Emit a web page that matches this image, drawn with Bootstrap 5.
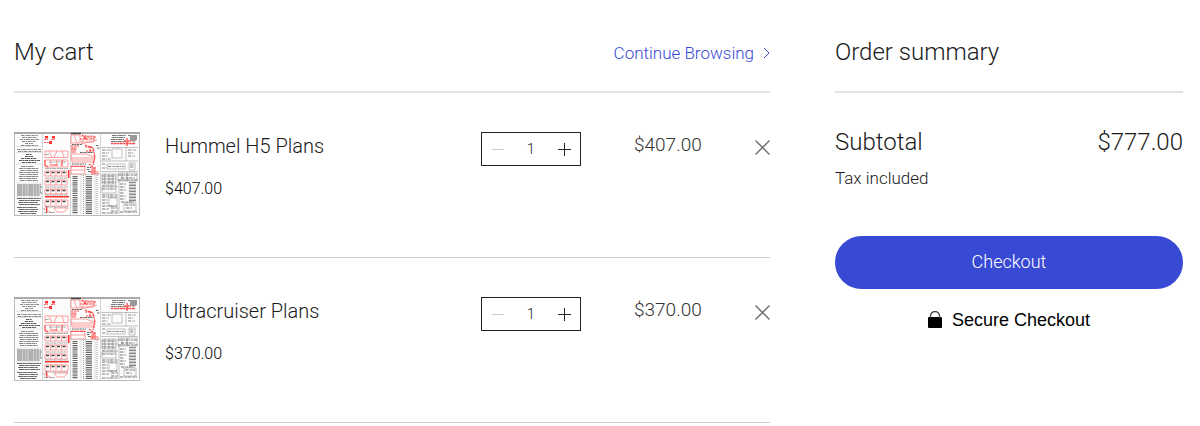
<!DOCTYPE html>
<html lang="en">
<head>
<meta charset="utf-8">
<meta name="viewport" content="width=device-width, initial-scale=1">
<title>My cart</title>
<link href="https://cdn.jsdelivr.net/npm/bootstrap@5.3.0/dist/css/bootstrap.min.css" rel="stylesheet">
<style>
  body { font-family: Roboto, "Liberation Sans", sans-serif; font-weight: 300; color: #1a1a1a; background: #fff; }
  .cart-page { padding: 30px 17px 0 14px; }
  @media (min-width: 992px) {
    .cart-page { display: grid; grid-template-columns: minmax(0, 63fr) minmax(0, 29fr); column-gap: 65px; }
  }
  .section-head { height: 63px; padding-top: 4px; border-bottom: 2px solid #e2e2e2; }
  .section-head h1, .section-head h2 { font-size: 24px; line-height: 36px; font-weight: 300; margin: 0; }
  .browse { font-size: 17px; line-height: 38px; color: #384ad3; gap: 9px; }
  .cart-item { padding: 39px 0 41px; border-bottom: 1px solid #ccc; }
  .thumb { width: 126px; height: 84px; margin-right: 25px; }
  .item-title { font-size: 20px; line-height: 28px; font-weight: 300; margin: 0; }
  .unit-price { font-size: 16px; line-height: 24px; margin-top: 17px; color: #000; }
  .stepper { width: 100px; height: 34px; border: 1px solid #222; margin-right: 53px; }
  .stepper button { width: 32px; padding: 0; border: 0; background: none; color: #222; line-height: 0; }
  .stepper button:disabled { color: #ccc; }
  .stepper input { width: 34px; padding: 0; border: 0; text-align: center; font-size: 14px; font-weight: 300; color: #1a1a1a; background: none; }
  .line-price { width: 112px; font-size: 19px; line-height: 26px; color: #333; }
  .remove { width: 32px; height: 30px; padding: 0 8px 0 9px; border: 0; background: none; color: #666; margin-right: -8px; line-height: 0; }
  .subtotal { font-size: 24px; line-height: 36px; margin-top: 31px; }
  .tax { font-size: 17px; line-height: 24px; margin-top: 6px; }
  .checkout { height: 53px; margin-top: 46px; padding: 0 0 3px; border: 0; border-radius: 27px; background: #384ad3; color: #fff; font-size: 18px; font-weight: 300; }
  .checkout:hover { background: #2c3cb8; color: #fff; }
  .secure { font: 400 18px/24px "Liberation Sans", Arial, sans-serif; color: #000; gap: 10px; margin-top: 19px; }
</style>
</head>
<body>
<svg width="0" height="0" class="position-absolute" aria-hidden="true">
  <filter id="scan" x="0" y="0" width="1" height="1"><feGaussianBlur stdDeviation=".45"/></filter>
  <symbol id="plans" viewBox="0 0 126 84">
    <rect width="126" height="84" fill="#fcfcfc"/>
    <g filter="url(#scan)">
    <rect width="126" height="84" fill="#fcfcfc"/>
    <!-- column rules -->
    <path d="M28.5 2V83M56.5 2V83M86.5 2V83" stroke="#bbb" stroke-width=".6"/>
    <!-- left text column -->
    <g fill="none" stroke="#555" stroke-width="1">
      <path stroke="#888" stroke-dasharray="3 .7 1.5 .5 4 .8" d="M7 3.5H24M8 5.5H23M6 7.5H25M8 9.5H22M11 11.5H19M7 13.5H24M3 17.500H27M4 19.500H27"/>
      <path stroke-dasharray="3 .6 2 .5" d="M12 22.500H18M11 24.500H19M7 26.500H23M5 28.500H26M8 30.500H22"/>
      <path stroke="#888" stroke-width="1.200" stroke-dasharray="4 .5 2 .6 5 .4" d="M7 34.500H20M5 36.500H24M6 38.500H24M5 40.500H25M6 42.500H24M5 44.500H25M5 46.500H23M6 48.500H24"/>
      <path stroke="#666" stroke-width="1.200" stroke-dasharray="5 .4 3 .3 2 .5" d="M3 53H27M3 55H28M3 57H27M3 59H27M3 61H28M3 63H26M3 66.500H27M5 68.500H26M4 70.500H24M5 72.500H26M3 75.500H23M5 77.500H24M4 79.500H23M6 81.500H22"/>
      <path stroke="#ccc" stroke-width=".5" d="M2 14.500H28M2 20.500H28M2 32H28M2 51H28M2 65H28"/>
    </g>
    <!-- second column: parts sheets -->
    <path fill="#f33" d="M31 4h3v2.500h-3zM38 4h3v2.500h-3zM35 9h3v3h-3zM54 38h1.500v8H54zM31 64h24v1.500H31zM32 74h1.300v7H32z"/>
    <path stroke="#e66" stroke-width="1" stroke-dasharray="2 .7" d="M30 10.500H36M30 7.500H34M37 7.500H41"/>
    <g fill="none" stroke="#f66" stroke-width=".6">
      <path d="M31 19H54V25.500H31zM35 19L38 25.500M43 19L40 25.500M48 19L50 25.500M31 28H54V35H31zM37 28L36 34M43 28L42 34M49 28L47 34"/>
      <path stroke="#f55" stroke-width="1.100" d="M31 28V33L34 35M48 28V34M37 33H44"/>
      <path d="M31 39H53V44H31zM31 48H53V53H31zM31 57H53V62H31zM31 68H54V74H31zM36.500 39V44M42 39V44M47.500 39V44M36.500 48V53M42 48V53M47.500 48V53M36.500 57V62M42 57V62M47.500 57V62M36.500 67V73M42 67V73M47.500 67V73M40 76H54L50 80H43zM29 76L38 81"/>
    </g>
    <path fill="none" stroke="#444" stroke-width="1.300" stroke-dasharray="3 2.500" d="M32 40.500H53M32 49.500H53M32 58.500H53M32 69.500H53"/>
    <path fill="none" stroke="#999" stroke-width=".8" stroke-dasharray="4 .6 2 .5" d="M31 36.500H54M31 46H54M31 55H54M31 63H54M31 75H54M31 22.500H35M35 30H52M30 77.500H31M30 80.500H41"/>
    <!-- third column: assembly sketches -->
    <g fill="none" stroke="#f77" stroke-width=".7">
      <path d="M57 3H66V11H57zM67 4H80V10H67M60 3L63 11M72 3L67 12L83 8M57 22H72L80 25V30H58zM58 26H79M58 28H79M57 34H71V42H57zM57 38H71"/>
      <path stroke="#f44" stroke-width="1.200" stroke-dasharray="2 .7 3 .5" d="M68 3L73 8M66 7H81M70 5H82M57 14H65M57 17H63M71 13L79 16L81 25L79 33M71 15H78M72 19H80M76 14V21M75 32L80 36L78 42M57 34.500H72M76 40H85M77 42H85M81 35V42"/>
    </g>
    <path fill="#f88" opacity=".7" d="M57 15h5v6h-5zM77 35h4v7h-4z"/>
    <path stroke="#666" stroke-width="1" stroke-dasharray="2 .6" fill="none" d="M82 13.500H85M73 35.500H77M73 37.500H76M74 39.500H77M83 16H86M58 12.500H68M66 20.500H79M58 32H72"/>
    <!-- parts lists -->
    <path fill="none" stroke="#666" stroke-width="5" stroke-dasharray="1 .8 1.200 .9 1 .8" d="M61 44V82"/>
    <path fill="none" stroke="#666" stroke-width="6" stroke-dasharray="1 .8 1.100 .8" d="M75 44V82"/>
    <path fill="none" stroke="#999" stroke-width="1" stroke-dasharray="1 1" d="M69.500 43V82M83 43V82"/>
    <path fill="none" stroke="#bbb" stroke-width=".5" d="M57 42.500H86M67 42V82M71.500 42V82M81 42V82"/>
    <!-- fourth column: title block and details -->
    <path stroke="#777" stroke-width="1" stroke-dasharray="4 .5 2 .5" fill="none" d="M98 3.500H112M98 5.500H111M97 7.500H110M97 9.500H112M114 3.500H122"/>
    <path fill="#999" d="M116 3h7v5l-3.500 2L116 8z"/>
    <path stroke="#f44" stroke-width="1.300" stroke-dasharray="2 .6 3 .5" d="M97 11.500H121M113 6V14M110 9H117"/>
    <g fill="none" stroke="#999" stroke-width=".6">
      <path d="M87 15.500H124M87 29H124M112 15V29M87 39.500H124M98 17H108V26H98zM93 32H111V37H93zM115 31H121V38H115zM88 42H102V52H88zM104 41H123V49H104zM88 55H102V61H88zM105 49V82M95 66H103V74H95zM110 71H122V79H110z"/>
      <path stroke="#888" stroke-dasharray="3 .7 1 1 2 .6" stroke-width="1" d="M88 18H97M88 21H95M88 24H94M88 27H97M114 18H122M114 21H120M114 24H121M94 34.500H110M116 33H120M116 35H120M88 32H92M88 36H92"/>
      <path stroke="#777" stroke-dasharray="3 .6 1 .7 2 .6" stroke-width="1.100" d="M88 44H102M88 47H102M88 50H102M104 43H123M107 46H121M104 48H124M106 52H112M106 55H111M106 58H112M106 61H110M106 64H112M106 67H111M88 54H104M88 57H102M88 63H104M88 65H104M88 68H94M88 71H94M88 74H103M88 77H95M97 76H104M97 79H104M88 81H104M107 70H120M111 73H121M106 80H123M112 76H118"/>
      <path stroke="#888" stroke-width="7" stroke-dasharray="1 .7 .7 .6" d="M118.500 50V70"/>
      <path stroke="#666" d="M91 42V52M95 42V52M99 42V52M108 41V48M113 41V48"/>
    </g>
    </g>
    <!-- sheet frame -->
    <rect x=".5" y=".5" width="125" height="83" fill="none" stroke="#bbb"/>
    <path d="M0 1H126" stroke="#aaa" stroke-width="2"/>
    <path d="M57 1.500H67" stroke="#444" stroke-width="1.500"/>
  </symbol>
  <symbol id="minus" viewBox="0 0 14 14"><path d="M1 7.500H13" stroke="currentColor"/></symbol>
  <symbol id="plus" viewBox="0 0 14 14"><path d="M1 7.500H14M7.500 1V14" stroke="currentColor"/></symbol>
  <symbol id="cross" viewBox="0 0 15 15"><path d="M.5.5L14.500 14.500M14.500.5L.5 14.500" stroke="currentColor" stroke-width="1.300"/></symbol>
</svg>

<div class="cart-page">
  <main>
    <div class="section-head d-flex align-items-start justify-content-between">
      <h1>My cart</h1>
      <a href="#" class="browse d-flex align-items-center text-decoration-none">Continue Browsing
        <svg width="7" height="12" viewBox="0 0 7 12" fill="none" stroke="currentColor" aria-hidden="true"><path d="M1 1L6 6L1 11"/></svg>
      </a>
    </div>
    <ul class="list-unstyled mb-0">
      <li class="cart-item d-flex align-items-start">
        <svg class="thumb flex-shrink-0" role="img" aria-label="Hummel H5 Plans"><use href="#plans"/></svg>
        <div class="flex-grow-1">
          <h3 class="item-title">Hummel H5 Plans</h3>
          <div class="unit-price">$407.00</div>
        </div>
        <div class="stepper d-flex align-items-center flex-shrink-0">
          <button type="button" aria-label="Decrease quantity" disabled><svg width="14" height="14"><use href="#minus"/></svg></button>
          <input type="text" inputmode="numeric" value="1" aria-label="Quantity of Hummel H5 Plans">
          <button type="button" aria-label="Increase quantity"><svg width="14" height="14"><use href="#plus"/></svg></button>
        </div>
        <div class="line-price flex-shrink-0">$407.00</div>
        <button type="button" class="remove flex-shrink-0" aria-label="Remove Hummel H5 Plans"><svg width="15" height="15"><use href="#cross"/></svg></button>
      </li>
      <li class="cart-item d-flex align-items-start">
        <svg class="thumb flex-shrink-0" role="img" aria-label="Ultracruiser Plans"><use href="#plans"/></svg>
        <div class="flex-grow-1">
          <h3 class="item-title">Ultracruiser Plans</h3>
          <div class="unit-price">$370.00</div>
        </div>
        <div class="stepper d-flex align-items-center flex-shrink-0">
          <button type="button" aria-label="Decrease quantity" disabled><svg width="14" height="14"><use href="#minus"/></svg></button>
          <input type="text" inputmode="numeric" value="1" aria-label="Quantity of Ultracruiser Plans">
          <button type="button" aria-label="Increase quantity"><svg width="14" height="14"><use href="#plus"/></svg></button>
        </div>
        <div class="line-price flex-shrink-0">$370.00</div>
        <button type="button" class="remove flex-shrink-0" aria-label="Remove Ultracruiser Plans"><svg width="15" height="15"><use href="#cross"/></svg></button>
      </li>
    </ul>
  </main>
  <aside>
    <div class="section-head"><h2>Order summary</h2></div>
    <div class="subtotal d-flex justify-content-between"><span>Subtotal</span><span>$777.00</span></div>
    <div class="tax">Tax included</div>
    <button type="button" class="btn checkout w-100">Checkout</button>
    <div class="secure d-flex justify-content-center align-items-center">
      <svg width="14" height="18" viewBox="0 0 14 18" aria-hidden="true"><rect y="6" width="14" height="11" rx="1"/><path d="M2.500 7V5a4.500 4.500 0 0 1 9 0V7" fill="none" stroke="#444" stroke-width="1.300"/></svg>
      <span>Secure Checkout</span>
    </div>
  </aside>
</div>
<script src="https://cdn.jsdelivr.net/npm/bootstrap@5.3.0/dist/js/bootstrap.bundle.min.js"></script>
</body>
</html>
